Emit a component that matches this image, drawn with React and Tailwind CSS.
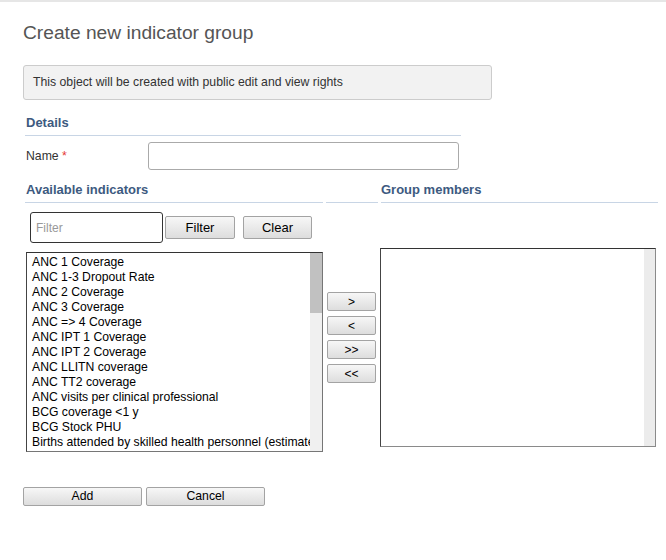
import React from 'react';

const indicators = [
  'ANC 1 Coverage',
  'ANC 1-3 Dropout Rate',
  'ANC 2 Coverage',
  'ANC 3 Coverage',
  'ANC => 4 Coverage',
  'ANC IPT 1 Coverage',
  'ANC IPT 2 Coverage',
  'ANC LLITN coverage',
  'ANC TT2 coverage',
  'ANC visits per clinical professional',
  'BCG coverage <1 y',
  'BCG Stock PHU',
  'Births attended by skilled health personnel (estimated pregnancies)',
];

const btn =
  'border border-[#a3a3a3] rounded-[2px] bg-gradient-to-b from-[#f7f7f7] to-[#dddddd] text-black flex items-center justify-center';

const App = () => {
  return (
    <div className="w-[666px] h-[560px] bg-white border-t-2 border-[#e6e6e6] font-['Liberation_Sans',Arial,sans-serif] text-[#333]">
      <div className="pl-[23px]">
        <h1 className="pt-[20px] text-[19.2px] leading-[22px] text-[#555]">Create new indicator group</h1>

        <div className="mt-[21px] w-[469px] h-[35px] bg-[#f2f2f2] border border-[#cccccc] rounded-[3px] pl-[9px] flex items-center text-[12.25px]">
          This object will be created with public edit and view rights
        </div>

        {/* details */}
        <div className="ml-[2px] w-[436px] h-[36px] pt-[15px] border-b border-[#c8d5e5] pl-[1px] text-[13px] leading-[16px] font-bold text-[#3d5a80]">
          Details
        </div>

        <div className="mt-[6px] flex items-center h-[28px]">
          <div className="ml-[3px] w-[122px] text-[12.25px]">
            Name <span className="text-[#e53935]">*</span>
          </div>
          <input className="w-[311px] h-[28px] border border-[#aaaaaa] rounded-[3px] outline-none" />
        </div>

        {/* headers */}
        <div className="ml-[2px] flex gap-[3px] h-[33px]">
          <div className="w-[298px] pt-[12px] pl-[1px] border-b border-[#c8d5e5] text-[13px] leading-[16px] font-bold text-[#3d5a80]">
            Available indicators
          </div>
          <div className="w-[52px] border-b border-[#c8d5e5]" />
          <div className="w-[277px] pt-[12px] border-b border-[#c8d5e5] text-[13px] leading-[16px] font-bold text-[#3d5a80]">
            Group members
          </div>
        </div>

        {/* filter */}
        <div className="mt-[9px] ml-[7px] flex items-center">
          <input
            placeholder="Filter"
            className="w-[133px] h-[31px] border border-[#333] rounded-[3px] pl-[5px] text-[12px] placeholder:text-[#999] outline-none"
          />
          <button className={`${btn} ml-[2px] w-[70px] h-[23px] text-[13px]`}>Filter</button>
          <button className={`${btn} ml-[8px] w-[69px] h-[23px] text-[13px]`}>Clear</button>
        </div>

        {/* lists */}
        <div className="mt-[5px] flex items-start">
          <div className="ml-[3px] mt-[4px] w-[297px] h-[200px] border border-[#767676] border-t-[#333] border-l-[#444] flex">
            <div className="flex-1 overflow-hidden pt-[2px] pl-[5px] text-[12.2px] leading-[15px] text-black">
              {indicators.map((name) => (
                <div key={name} className="whitespace-nowrap">{name}</div>
              ))}
            </div>
            <div className="w-[12px] bg-[#f0f0f0]">
              <div className="h-[60px] bg-[#c1c1c1]" />
            </div>
          </div>

          <div className="ml-[4px] mt-[44px] w-[49px] flex flex-col gap-[5px]">
            {['>', '<', '>>', '<<'].map((s) => (
              <button key={s} className={`${btn} h-[19px] text-[12px]`}>{s}</button>
            ))}
          </div>

          <div className="ml-[4px] w-[276px] h-[199px] border border-[#8a8a8a] border-t-[#333] border-l-[#444] flex">
            <div className="flex-1" />
            <div className="w-[11px] bg-[#ececec]" />
          </div>
        </div>

        {/* actions */}
        <div className="mt-[35px] flex gap-[4px]">
          <button className={`${btn} w-[119px] h-[19px] text-[12.25px]`}>Add</button>
          <button className={`${btn} w-[119px] h-[19px] text-[12.25px]`}>Cancel</button>
        </div>
      </div>
    </div>
  );
};

export default App;
